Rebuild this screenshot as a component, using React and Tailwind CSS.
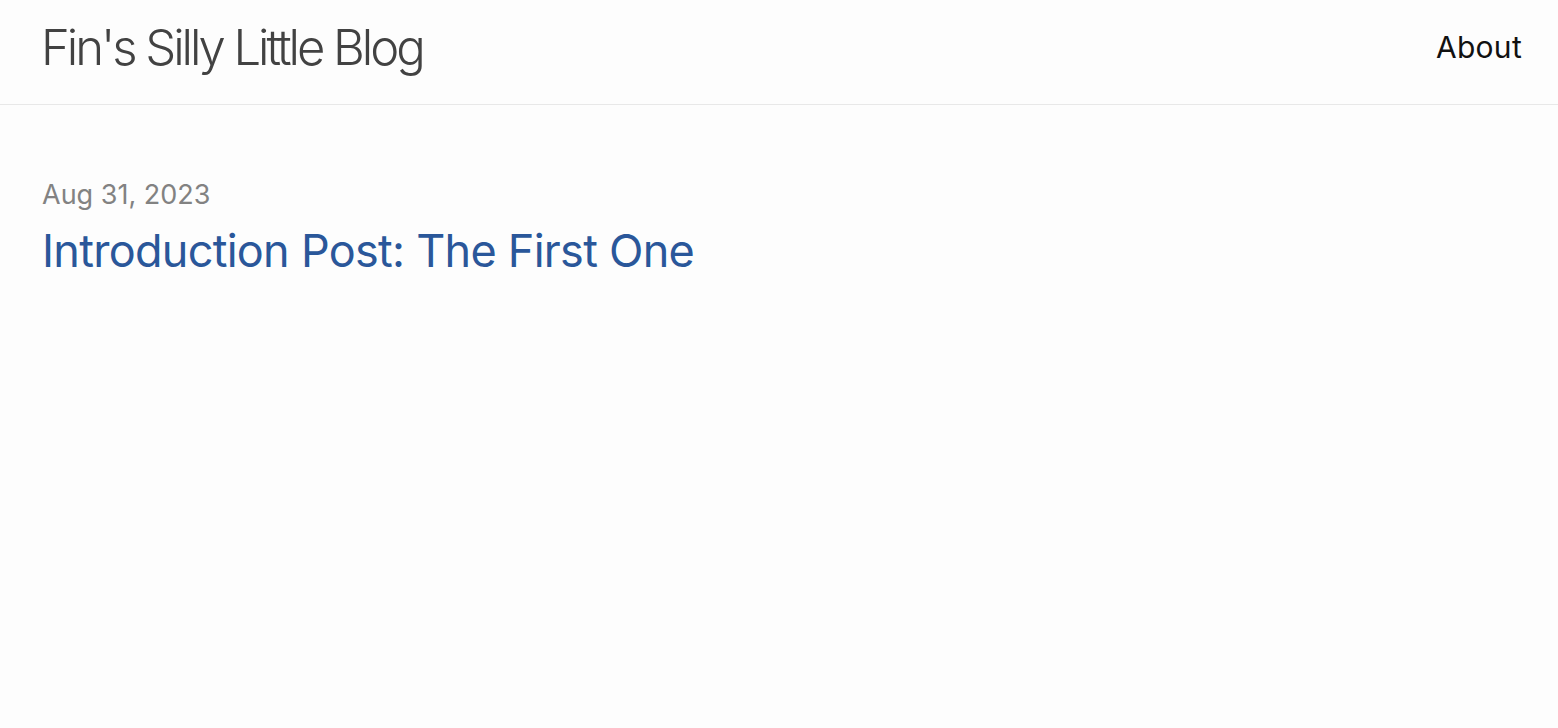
export default function App() {
  return (
    <div className="min-h-screen bg-[#fdfdfd] font-['Inter',sans-serif]">
      <header className="h-[105px] border-b border-[#e8e8e8] flex items-center justify-between pl-[42px] pr-[36px]">
        <a className="text-[49px] font-light tracking-[-0.062em] text-[#424242] -mt-[9px] -ml-[1px]">
          Fin's Silly Little Blog
        </a>
        <nav>
          <a className="text-[30px] tracking-[0.01em] text-[#111] -mt-[9px] block">About</a>
        </nav>
      </header>

      <main className="px-[42px] pt-[72px]">
        <ul>
          <li>
            <span className="block text-[27px] text-[#828282] leading-[36px]">Aug 31, 2023</span>
            <h3 className="text-[45px] tracking-[-0.016em] text-[#2a579a] leading-[58px] mt-[9px]">
              <a>Introduction Post: The First One</a>
            </h3>
          </li>
        </ul>
      </main>
    </div>
  );
}
